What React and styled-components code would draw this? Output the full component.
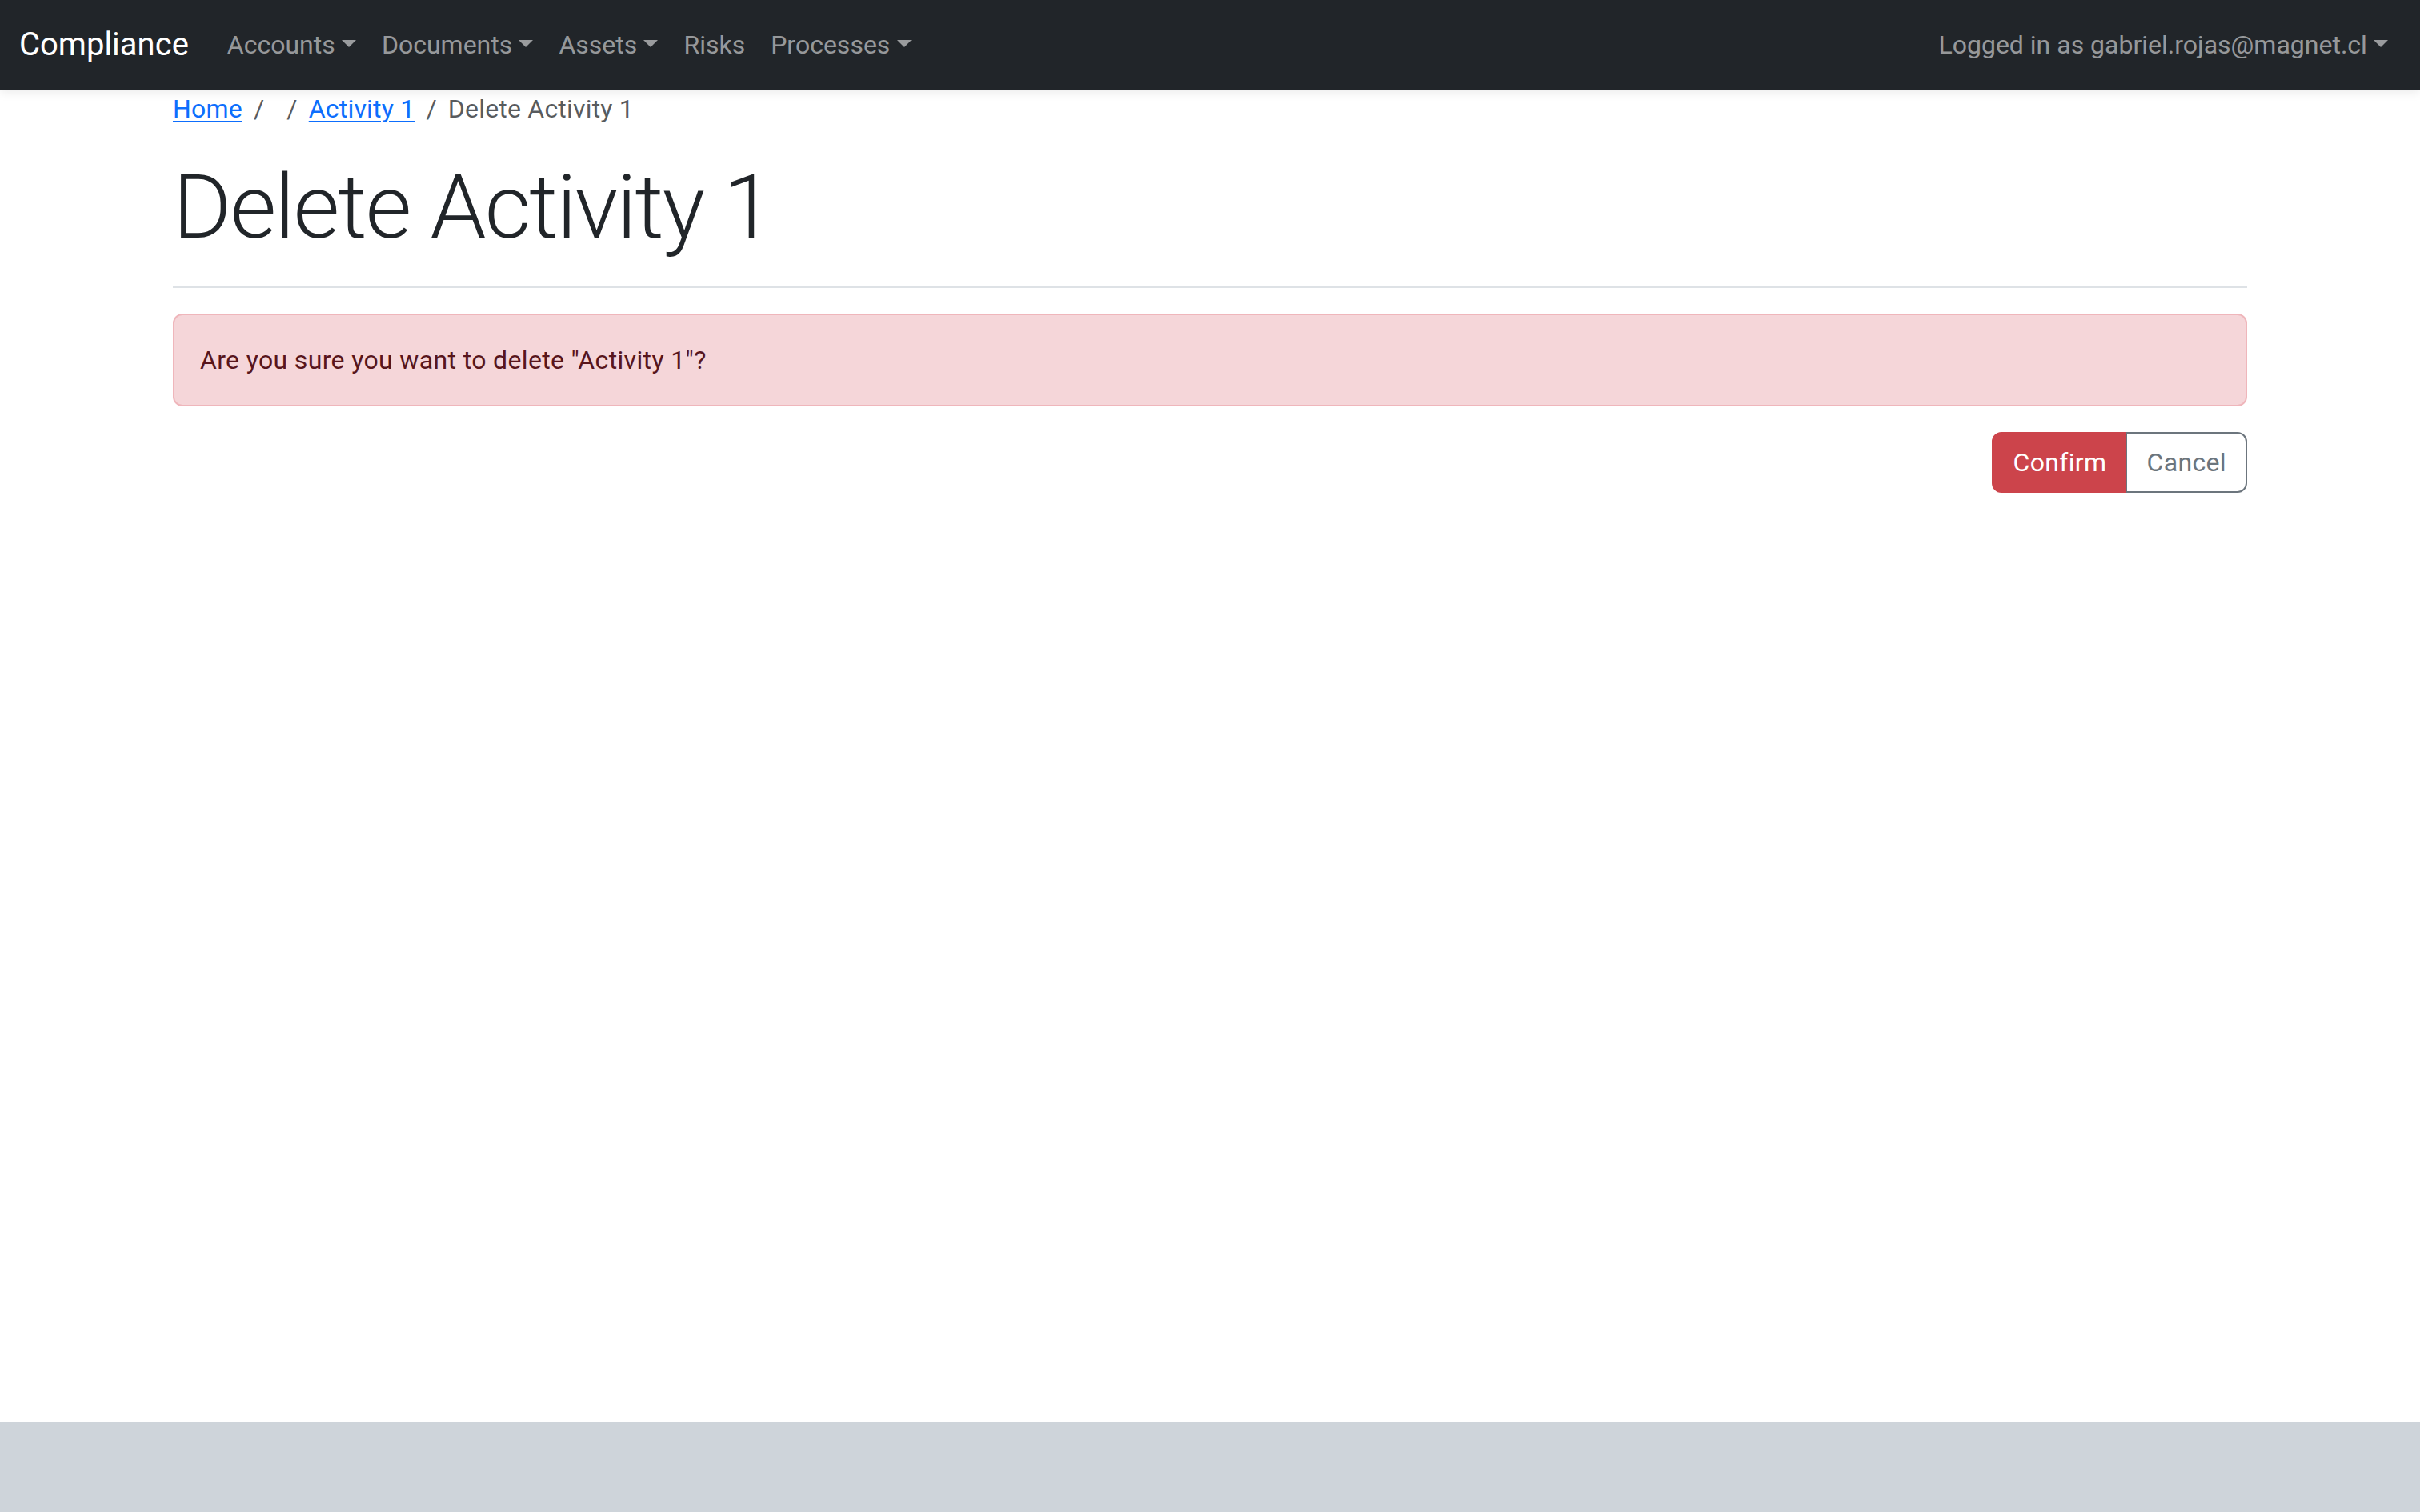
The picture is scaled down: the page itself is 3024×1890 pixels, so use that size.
import styled, { createGlobalStyle } from "styled-components";

const GlobalStyle = createGlobalStyle`
    * { box-sizing: border-box; }
    html, body { margin: 0; padding: 0; }
    body {
        font-family: Roboto, "Liberation Sans", "Noto Sans", sans-serif;
        font-size: 32px;
        line-height: 1.5;
        letter-spacing: 0.35px;
        color: #212529;
        background: #fff;
    }
`;

const Page = styled.div`
    min-height: 100vh;
    display: flex;
    flex-direction: column;
`;

const Navbar = styled.nav`
    height: 112px;
    background: #212529;
    padding: 0 24px;
    display: flex;
    align-items: center;
    box-shadow: 0 4px 12px rgba(0, 0, 0, 0.08);
    position: relative;
    z-index: 1;
    letter-spacing: 0;
`;

const Brand = styled.a`
    color: #fff;
    font-size: 40px;
    line-height: 1.5;
    margin-right: 32px;
    text-decoration: none;
`;

const NavList = styled.ul`
    display: flex;
    list-style: none;
    margin: 0;
    padding: 0;
    margin-left: ${(p) => (p.$end ? "auto" : "0")};
`;

const NavLink = styled.a`
    display: block;
    padding: 16px;
    color: rgba(255, 255, 255, 0.55);
    text-decoration: none;
    font-size: 32px;
    line-height: 48px;

    ${(p) =>
        p.$dropdown &&
        `
        &::after {
            content: "";
            display: inline-block;
            margin-left: 0.255em;
            vertical-align: 0.255em;
            border-top: 0.3em solid;
            border-right: 0.3em solid transparent;
            border-left: 0.3em solid transparent;
            border-bottom: 0;
        }
    `}
`;

const Main = styled.main`
    flex: 1;
    width: 100%;
    max-width: 2640px;
    margin: 0 auto;
    padding: 0 24px;
`;

const Breadcrumb = styled.ol`
    display: flex;
    list-style: none;
    margin: 0 0 32px;
    padding: 0;
    line-height: 48px;
    letter-spacing: 0.2px;

    li + li::before {
        content: "/";
        float: left;
        padding: 0 14px;
        color: rgba(33, 37, 41, 0.75);
    }
`;

const Crumb = styled.li`
    color: ${(p) => (p.$active ? "rgba(33, 37, 41, 0.75)" : "inherit")};

    a {
        color: #0d6efd;
        text-decoration: underline;
        text-underline-offset: 4px;
        text-decoration-thickness: 2px;
    }
`;

const Title = styled.h1`
    font-size: 112px;
    font-weight: 300;
    line-height: 1.2;
    letter-spacing: -2px;
    margin: 0;
`;

const Rule = styled.hr`
    margin: 32px 0;
    border: 0;
    border-top: 2px solid #dee2e6;
`;

const Alert = styled.div`
    padding: 32px;
    margin-bottom: 32px;
    border: 2px solid #efb6bb;
    border-radius: 12px;
    background: #f5d6d9;
    color: #58151c;
    line-height: 48px;
`;

const Actions = styled.div`
    display: flex;
    justify-content: flex-end;
`;

const ButtonGroup = styled.div`
    display: inline-flex;
`;

const Button = styled.button`
    font-family: inherit;
    font-size: 32px;
    letter-spacing: inherit;
    line-height: 48px;
    padding: 12px 24px;
    border: 2px solid;
    cursor: pointer;
    background: ${(p) => (p.$variant === "danger" ? "#cc444b" : "transparent")};
    border-color: ${(p) => (p.$variant === "danger" ? "#cc444b" : "#6c757d")};
    color: ${(p) => (p.$variant === "danger" ? "#fff" : "#6c757d")};

    &:first-child {
        border-radius: 12px 0 0 12px;
    }
    &:last-child {
        border-radius: 0 12px 12px 0;
        margin-left: -2px;
    }
`;

const Footer = styled.footer`
    height: 112px;
    background: #ced4da;
`;

const menu = [
    { label: "Accounts", dropdown: true },
    { label: "Documents", dropdown: true },
    { label: "Assets", dropdown: true },
    { label: "Risks", dropdown: false },
    { label: "Processes", dropdown: true },
];

export default function App() {
    return (
        <Page>
            <GlobalStyle />
            <Navbar>
                <Brand href="#">Compliance</Brand>
                <NavList>
                    {menu.map((item) => (
                        <li key={item.label}>
                            <NavLink href="#" $dropdown={item.dropdown}>
                                {item.label}
                            </NavLink>
                        </li>
                    ))}
                </NavList>
                <NavList $end>
                    <li>
                        <NavLink href="#" $dropdown>
                            Logged in as gabriel.rojas@magnet.cl
                        </NavLink>
                    </li>
                </NavList>
            </Navbar>

            <Main>
                <Breadcrumb>
                    <Crumb><a href="#">Home</a></Crumb>
                    <Crumb></Crumb>
                    <Crumb><a href="#">Activity 1</a></Crumb>
                    <Crumb $active>Delete Activity 1</Crumb>
                </Breadcrumb>

                <Title>Delete Activity 1</Title>
                <Rule />

                <Alert>Are you sure you want to delete "Activity 1"?</Alert>

                <Actions>
                    <ButtonGroup>
                        <Button $variant="danger">Confirm</Button>
                        <Button>Cancel</Button>
                    </ButtonGroup>
                </Actions>
            </Main>

            <Footer />
        </Page>
    );
}
